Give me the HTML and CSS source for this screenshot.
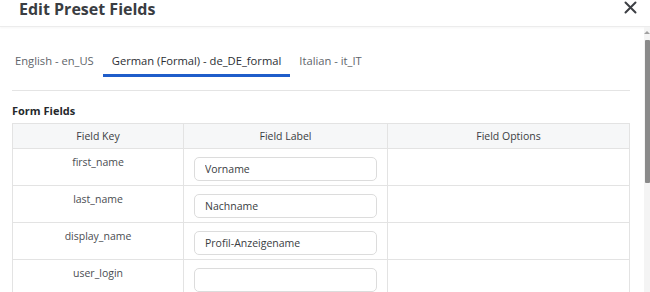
FILE: index.html
```html
<!DOCTYPE html>
<html lang="en">
<head>
  <meta charset="UTF-8">
  <title>Edit Preset Fields</title>
  <link rel="stylesheet" href="styles.css">
</head>
<body>
<div class="modal">
  <div class="modal-header">
    <h2 class="modal-title">Edit Preset Fields</h2>
    <button class="close-btn" type="button">
      <svg width="13" height="13" viewBox="0 0 13 13"><path d="M1.5 1.5 L11.5 11.5 M11.5 1.5 L1.5 11.5" stroke="#3c3f44" stroke-width="2" stroke-linecap="round"/></svg>
    </button>
  </div>

  <div class="modal-main">
    <div class="modal-body">
      <div class="tabs">
        <a class="tab">English - en_US</a>
        <a class="tab active">German (Formal) - de_DE_formal</a>
        <a class="tab">Italian - it_IT</a>
      </div>

      <h3 class="section-title">Form Fields</h3>

      <table class="fields">
        <thead>
          <tr>
            <th class="col-key">Field Key</th>
            <th class="col-label">Field Label</th>
            <th>Field Options</th>
          </tr>
        </thead>
        <tbody>
          <tr>
            <td class="key">first_name</td>
            <td><input type="text" value="Vorname"></td>
            <td></td>
          </tr>
          <tr>
            <td class="key">last_name</td>
            <td><input type="text" value="Nachname"></td>
            <td></td>
          </tr>
          <tr>
            <td class="key">display_name</td>
            <td><input type="text" value="Profil-Anzeigename"></td>
            <td></td>
          </tr>
          <tr>
            <td class="key">user_login</td>
            <td><input type="text" value=""></td>
            <td></td>
          </tr>
        </tbody>
      </table>
    </div>

    <div class="scrollbar">
      <span class="scroll-arrow"></span>
      <span class="scroll-thumb"></span>
    </div>
  </div>
</div>
</body>
</html>
```

FILE: styles.css
```css
* {
  margin: 0;
  padding: 0;
  box-sizing: border-box;
}

body {
  font-family: "Open Sans", "Noto Sans", sans-serif;
  color: #3a3d42;
  background: #fff;
  overflow: hidden;
}

.modal {
  width: 650px;
  height: 292px;
  display: flex;
  flex-direction: column;
}

.modal-header {
  flex-shrink: 0;
  height: 27px;
  display: flex;
  align-items: flex-start;
  justify-content: space-between;
  padding: 0 13px 0 19px;
  border-bottom: 1px solid #ececec;
  box-shadow: 0 1px 2px rgba(0, 0, 0, 0.04);
}

.modal-title {
  font-size: 16px;
  font-weight: 700;
  line-height: 19px;
  color: #3a3d42;
}

.close-btn {
  border: none;
  background: none;
  margin-top: 1px;
  width: 13px;
  height: 13px;
}

.modal-main {
  flex: 1;
  min-height: 0;
  overflow: hidden;
  display: flex;
}

.modal-body {
  flex: 1;
  padding: 0 14px 0 12px;
}

.tabs {
  display: flex;
  margin-left: -6px;
  padding-top: 20px;
  padding-bottom: 14px;
  margin-bottom: 13px;
  position: relative;
}

.tabs::after {
  content: "";
  position: absolute;
  left: 6px;
  right: 0;
  bottom: 0;
  border-bottom: 1px solid #e4e4e4;
}

.tab {
  font-size: 11.2px;
  line-height: 14px;
  padding: 7px 9px 6px;
  color: #60646a;
  border-bottom: 3px solid transparent;
}

.tab.active {
  color: #2b2e33;
  border-bottom-color: #1f5dca;
}

.section-title {
  font-size: 11px;
  font-weight: 700;
  line-height: 14px;
  color: #25282c;
  margin-bottom: 5px;
}

.fields {
  width: 100%;
  border-collapse: collapse;
  border: 1px solid #e3e3e3;
  font-size: 10.5px;
}

.fields th,
.fields td {
  border: 1px solid #e3e3e3;
}

.fields th {
  background: #f6f7f8;
  font-weight: 400;
  height: 25px;
  color: #3a3d42;
}

.col-key {
  width: 171px;
}

.col-label {
  width: 204px;
}

.fields td {
  height: 37px;
  vertical-align: top;
  padding: 7px 10px 0;
}

.fields td.key {
  text-align: center;
  line-height: 13px;
  color: #4a4d52;
}

.fields input {
  width: 100%;
  height: 24px;
  margin-top: 1px;
  border: 1px solid #dcdcdc;
  border-radius: 5px;
  padding: 0 10px;
  font-family: inherit;
  font-size: 10.5px;
  color: #3a3d42;
}

.scrollbar {
  width: 6px;
  background: #f4f4f4;
  display: flex;
  flex-direction: column;
  align-items: center;
}

.scroll-arrow {
  margin-top: 4px;
  width: 0;
  height: 0;
  border-left: 3px solid transparent;
  border-right: 3px solid transparent;
  border-bottom: 3px solid #a0a0a0;
}

.scroll-thumb {
  margin-top: 6px;
  width: 5px;
  height: 143px;
  background: #8a8a8a;
  border-radius: 1px;
}
```
